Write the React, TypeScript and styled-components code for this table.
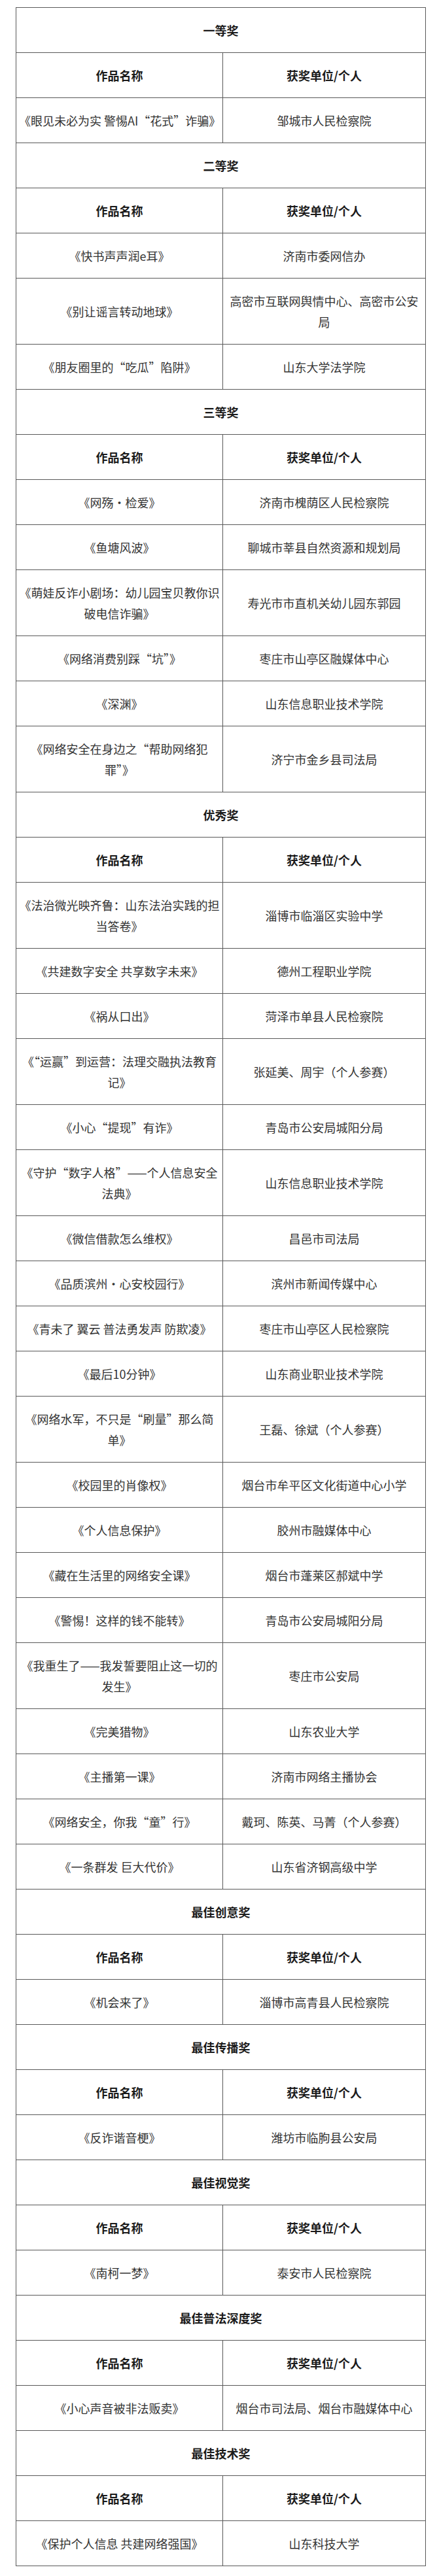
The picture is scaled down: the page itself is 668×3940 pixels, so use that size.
import styled, { createGlobalStyle } from "styled-components";

const GlobalStyle = createGlobalStyle`
  html, body {
    margin: 0;
    padding: 0;
    background: #fff;
  }
  body {
    font-family: "Noto Sans CJK SC", "Liberation Sans", sans-serif;
    color: #333;
  }
`;

const Page = styled.main`
  width: 668px;
  padding: 11px 18px 17px 24px;
  box-sizing: border-box;
`;

const Table = styled.table`
  width: 626px;
  border-collapse: collapse;
  table-layout: fixed;
  font-size: 18px;
  line-height: 32px;
`;

const Cell = styled.td<{ $bold?: boolean }>`
  border: 1px solid #595959;
  padding: 18px 4px;
  text-align: center;
  vertical-align: middle;
  white-space: pre;
  font-weight: ${(p) => (p.$bold ? 700 : 400)};
  color: ${(p) => (p.$bold ? "#1a1a1a" : "#333")};
`;

type Entry = [string, string];

type Section = {
  title: string;
  rows: Entry[];
};

const sections: Section[] = [
  {
    title: "一等奖",
    rows: [["《眼见未必为实 警惕AI“花式”诈骗》", "邹城市人民检察院"]],
  },
  {
    title: "二等奖",
    rows: [
      ["《快书声声润e耳》", "济南市委网信办"],
      ["《别让谣言转动地球》", "高密市互联网舆情中心、高密市公安\n局"],
      ["《朋友圈里的“吃瓜”陷阱》", "山东大学法学院"],
    ],
  },
  {
    title: "三等奖",
    rows: [
      ["《网殇·检爱》", "济南市槐荫区人民检察院"],
      ["《鱼塘风波》", "聊城市莘县自然资源和规划局"],
      ["《萌娃反诈小剧场：幼儿园宝贝教你识\n破电信诈骗》", "寿光市市直机关幼儿园东郭园"],
      ["《网络消费别踩“坑”》", "枣庄市山亭区融媒体中心"],
      ["《深渊》", "山东信息职业技术学院"],
      ["《网络安全在身边之“帮助网络犯\n罪”》", "济宁市金乡县司法局"],
    ],
  },
  {
    title: "优秀奖",
    rows: [
      ["《法治微光映齐鲁：山东法治实践的担\n当答卷》", "淄博市临淄区实验中学"],
      ["《共建数字安全 共享数字未来》", "德州工程职业学院"],
      ["《祸从口出》", "菏泽市单县人民检察院"],
      ["《“运赢”到运营：法理交融执法教育\n记》", "张延美、周宇（个人参赛）"],
      ["《小心“提现”有诈》", "青岛市公安局城阳分局"],
      ["《守护“数字人格”——个人信息安全\n法典》", "山东信息职业技术学院"],
      ["《微信借款怎么维权》", "昌邑市司法局"],
      ["《品质滨州·心安校园行》", "滨州市新闻传媒中心"],
      ["《青未了 翼云 普法勇发声 防欺凌》", "枣庄市山亭区人民检察院"],
      ["《最后10分钟》", "山东商业职业技术学院"],
      ["《网络水军，不只是“刷量”那么简\n单》", "王磊、徐斌（个人参赛）"],
      ["《校园里的肖像权》", "烟台市牟平区文化街道中心小学"],
      ["《个人信息保护》", "胶州市融媒体中心"],
      ["《藏在生活里的网络安全课》", "烟台市蓬莱区郝斌中学"],
      ["《警惕！这样的钱不能转》", "青岛市公安局城阳分局"],
      ["《我重生了——我发誓要阻止这一切的\n发生》", "枣庄市公安局"],
      ["《完美猎物》", "山东农业大学"],
      ["《主播第一课》", "济南市网络主播协会"],
      ["《网络安全，你我“童”行》", "戴珂、陈英、马菁（个人参赛）"],
      ["《一条群发 巨大代价》", "山东省济钢高级中学"],
    ],
  },
  {
    title: "最佳创意奖",
    rows: [["《机会来了》", "淄博市高青县人民检察院"]],
  },
  {
    title: "最佳传播奖",
    rows: [["《反诈谐音梗》", "潍坊市临朐县公安局"]],
  },
  {
    title: "最佳视觉奖",
    rows: [["《南柯一梦》", "泰安市人民检察院"]],
  },
  {
    title: "最佳普法深度奖",
    rows: [["《小心声音被非法贩卖》", "烟台市司法局、烟台市融媒体中心"]],
  },
  {
    title: "最佳技术奖",
    rows: [["《保护个人信息 共建网络强国》", "山东科技大学"]],
  },
];

const AwardSection = ({ title, rows }: Section) => (
  <>
    <tr>
      <Cell colSpan={2} $bold>
        {title}
      </Cell>
    </tr>
    <tr>
      <Cell $bold>作品名称</Cell>
      <Cell $bold>获奖单位/个人</Cell>
    </tr>
    {rows.map(([work, winner]) => (
      <tr key={work}>
        <Cell>{work}</Cell>
        <Cell>{winner}</Cell>
      </tr>
    ))}
  </>
);

export default function App() {
  return (
    <Page>
      <GlobalStyle />
      <Table>
        <colgroup>
          <col style={{ width: 316 }} />
          <col style={{ width: 310 }} />
        </colgroup>
        <tbody>
          {sections.map((s) => (
            <AwardSection key={s.title} {...s} />
          ))}
        </tbody>
      </Table>
    </Page>
  );
}
